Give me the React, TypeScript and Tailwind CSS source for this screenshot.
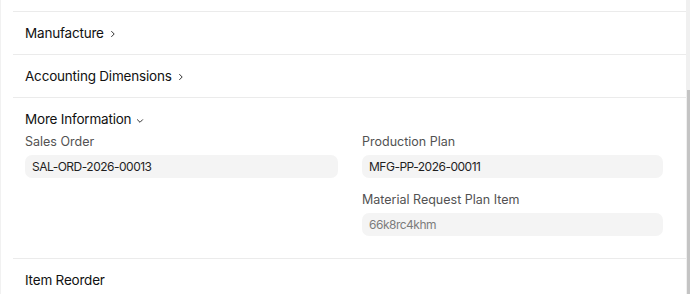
import React from "react";

function ChevronRight() {
  return (
    <svg width="10" height="10" viewBox="0 0 10 10" fill="none" className="ml-[4px] mt-[2px] shrink-0">
      <path d="M3.6 2.4 L6.2 5 L3.6 7.6" stroke="#333" strokeWidth="1" strokeLinecap="round" strokeLinejoin="round" />
    </svg>
  );
}

function ChevronDown() {
  return (
    <svg width="10" height="10" viewBox="0 0 10 10" fill="none" className="ml-[4px] mt-[3px] shrink-0">
      <path d="M2.4 3.7 L5 6.3 L7.6 3.7" stroke="#333" strokeWidth="1" strokeLinecap="round" strokeLinejoin="round" />
    </svg>
  );
}

function Field({ label, value, muted }: { label: string; value: string; muted?: boolean }) {
  return (
    <div className="flex flex-col">
      <div className="text-[12.5px] leading-[16px] text-[#525252] h-[16px] mb-[5px]">{label}</div>
      <div
        className={`h-[23px] rounded-[7px] bg-[#f4f4f4] px-[7px] flex items-center text-[12px] tracking-[-0.5px] ${
          muted ? "text-[#7c7c7c]" : "text-[#1f1f1f]"
        }`}
      >
        {value}
      </div>
    </div>
  );
}

function SectionHead({ title, open, noIcon }: { title: string; open?: boolean; noIcon?: boolean }) {
  return (
    <div className="flex items-center text-[13.5px] font-normal tracking-[-0.2px] text-[#111111] leading-[18px]">
      <span>{title}</span>
      {noIcon ? null : open ? <ChevronDown /> : <ChevronRight />}
    </div>
  );
}

export default function App() {
  return (
    <div
      className="w-[690px] h-[294px] overflow-hidden bg-white flex"
      style={{ fontFamily: "Inter, 'Noto Sans', sans-serif" }}
    >
      <div className="w-[1px] bg-[#f1f1f1] shrink-0" />
      <div className="flex-1 flex flex-col pl-[12px]">
        <div className="h-[11px] shrink-0" />
        <div className="border-t border-[#ebebeb] shrink-0" />
        <div className="h-[42px] shrink-0 flex items-center pl-[12px]">
          <SectionHead title="Manufacture" />
        </div>
        <div className="border-t border-[#ebebeb] shrink-0" />
        <div className="h-[42px] shrink-0 flex items-center pl-[12px]">
          <SectionHead title="Accounting Dimensions" />
        </div>
        <div className="border-t border-[#ebebeb] shrink-0" />
        <div className="pl-[12px] pt-[12px] pb-[22px] shrink-0">
          <SectionHead title="More Information" open />
          <div className="grid grid-cols-[313px_301px] gap-x-[24px] mt-[6px]">
            <div className="flex flex-col">
              <Field label="Sales Order" value="SAL-ORD-2026-00013" />
            </div>
            <div className="flex flex-col gap-[14px]">
              <Field label="Production Plan" value="MFG-PP-2026-00011" />
              <Field label="Material Request Plan Item" value="66k8rc4khm" muted />
            </div>
          </div>
        </div>
        <div className="border-t border-[#ebebeb] shrink-0" />
        <div className="h-[42px] shrink-0 flex items-center pl-[12px]">
          <SectionHead title="Item Reorder" noIcon />
        </div>
      </div>
      <div className="w-[4px] bg-[#f0f0f0] flex flex-col shrink-0">
        <div className="h-[90px] shrink-0" />
        <div className="flex-1 ml-[1px] bg-[#c4c4c4]" />
      </div>
    </div>
  );
}
